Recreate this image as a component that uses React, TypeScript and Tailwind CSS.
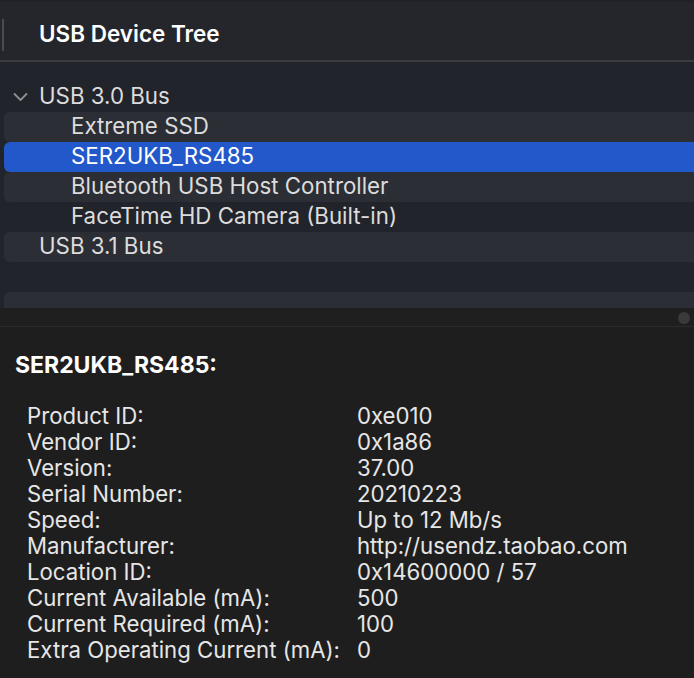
import React from "react";

const rows: { label: string; level: number; chevron?: boolean; selected?: boolean }[] = [
  { label: "USB 3.0 Bus", level: 0, chevron: true },
  { label: "Extreme SSD", level: 1 },
  { label: "SER2UKB_RS485", level: 1, selected: true },
  { label: "Bluetooth USB Host Controller", level: 1 },
  { label: "FaceTime HD Camera (Built-in)", level: 1 },
  { label: "USB 3.1 Bus", level: 0 },
  { label: "", level: 0 },
  { label: "", level: 0 },
];

const details: [string, string][] = [
  ["Product ID:", "0xe010"],
  ["Vendor ID:", "0x1a86"],
  ["Version:", "37.00"],
  ["Serial Number:", "20210223"],
  ["Speed:", "Up to 12 Mb/s"],
  ["Manufacturer:", "http://usendz.taobao.com"],
  ["Location ID:", "0x14600000 / 57"],
  ["Current Available (mA):", "500"],
  ["Current Required (mA):", "100"],
  ["Extra Operating Current (mA):", "0"],
];

export default function App() {
  return (
    <div
      className="w-[694px] h-[678px] overflow-hidden flex flex-col bg-[#1e1e1e] text-[#dedede]"
      style={{ fontFamily: "Inter, 'Noto Sans', sans-serif" }}
    >
      <div className="h-[62px] shrink-0 bg-[#25262b] border-t-[2px] border-[#202126] border-b-[2px] border-b-[#3a3b40] flex items-center relative">
        <div className="absolute left-[2px] top-[17px] w-[2px] h-[32px] bg-[#4a4b50]" />
        <div className="pl-[39px] text-[22.5px] font-semibold text-white leading-none pt-[6px]">USB Device Tree</div>
      </div>
      <div className="h-[246px] shrink-0 bg-[#22242b] pt-[20px] overflow-hidden">
        {rows.map((r, i) => {
          const bg = r.selected ? "bg-[#2258c9]" : i % 2 === 1 ? "bg-[#2c2e35]" : "bg-transparent";
          return (
            <div key={i} className={`ml-[4px] h-[30px] rounded-l-[6px] flex items-center ${bg}`}>
              <div className="w-[35px] shrink-0 flex justify-end pr-[11px]">
                {r.chevron && (
                  <svg width="15" height="10" viewBox="0 0 15 10" fill="none">
                    <path d="M1.5 2 L7.5 8 L13.5 2" stroke="#8e8f94" strokeWidth="1.8" strokeLinecap="round" strokeLinejoin="round" />
                  </svg>
                )}
              </div>
              <div
                className={`text-[22.3px] leading-none whitespace-nowrap pb-[2px] ${r.level === 1 ? "pl-[32px]" : ""} ${r.selected ? "text-white" : "text-[#dcdcdc]"}`}
              >
                {r.label}
              </div>
            </div>
          );
        })}
      </div>
      <div className="h-[19px] shrink-0 bg-[#1f1f1f] border-b border-[#2b2b2b] relative">
        <div className="absolute right-[4px] top-[4px] w-[12px] h-[12px] rounded-full bg-[#3a3a3a]" />
      </div>
      <div className="flex-1 bg-[#1e1e1e] pl-[15px] pt-[25px]">
        <div className="text-[23px] font-bold text-white leading-[26px]">SER2UKB_RS485:</div>
        <div className="mt-[25px] pl-[12px] grid grid-cols-[330px_1fr] text-[22.2px] leading-[26px] text-[#e6e6e6]">
          {details.map(([k, v]) => (
            <React.Fragment key={k}>
              <div className="whitespace-nowrap">{k}</div>
              <div className="whitespace-nowrap">{v}</div>
            </React.Fragment>
          ))}
        </div>
      </div>
    </div>
  );
}
